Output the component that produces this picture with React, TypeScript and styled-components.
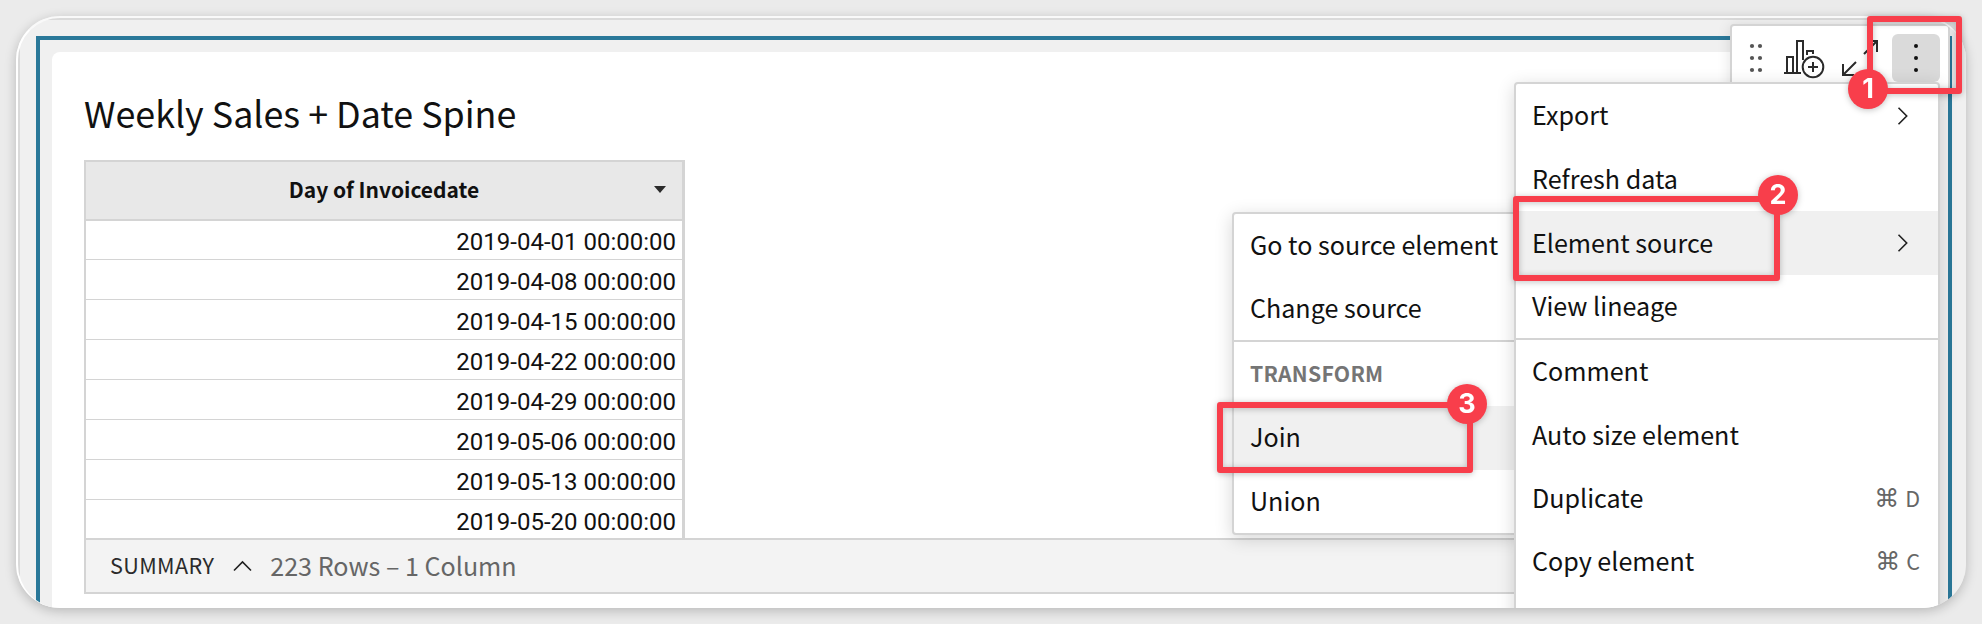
import React from 'react';
import styled, { createGlobalStyle } from 'styled-components';

const sans = `'Noto Sans CJK SC', 'Noto Sans', sans-serif`;

const GlobalStyle = createGlobalStyle`
  * { box-sizing: border-box; }
  body { margin: 0; background: #ebebeb; font-family: ${sans}; color: #111; }
`;

const Stage = styled.main`
  position: relative;
  width: 1982px;
  height: 624px;
  padding: 16px;
  overflow: hidden;
  background: #ebebeb;
`;

const Window = styled.section`
  position: relative;
  width: 1950px;
  height: 592px;
  border-radius: 44px;
  overflow: hidden;
  background: #f0f0f0;
  border-top: 2px solid #f9f9f9;
  border-left: 2px solid #fff;
`;

const WindowShadow = styled.div`
  border-radius: 44px;
  width: 1950px;
  box-shadow: 0 3px 12px rgba(0, 0, 0, 0.22);
`;

const Canvas = styled.div`
  height: 606px;
  padding: 16px 14px 0 16px;
  border-top: 2px solid #dadada;
  border-left: 2px solid #dadada;
`;

const Selected = styled.div`
  height: 640px;
  border: 4px solid #2a7899;
  padding: 12px;
`;

const Element = styled.article`
  height: 640px;
  border-radius: 8px;
  background: #fff;
  padding: 34px 32px 0;
`;

const Title = styled.h1`
  margin: 0 0 22px;
  height: 52px;
  line-height: 52px;
  font-size: 35.85px;
  font-weight: 400;
  white-space: nowrap;
`;

const Table = styled.div`
  width: 601px;
  border: 2px solid #d4d4d4;
  border-right-width: 3px;
  border-bottom: 0;
`;

const HeaderCell = styled.div`
  display: flex;
  align-items: center;
  justify-content: center;
  position: relative;
  height: 59px;
  padding-bottom: 4px;
  border-bottom: 2px solid #d4d4d4;
  background: #e8e8e8;
  font-size: 21px;
  font-weight: 600;
`;

const Caret = styled.span`
  position: absolute;
  right: 16px;
  top: 24px;
  border: 6.5px solid transparent;
  border-top: 7px solid #2b2b2b;
  border-bottom: 0;
`;

const Row = styled.div<{ $last?: boolean; $first?: boolean }>`
  height: ${p => (p.$first ? 39 : p.$last ? 38 : 40)}px;
  line-height: ${p => (p.$first ? 42 : 44)}px;
  padding-right: 6px;
  border-bottom: ${p => (p.$last ? 0 : 1)}px solid #d4d4d4;
  font-family: Roboto, sans-serif;
  font-size: 24px;
  text-align: right;
`;

const Summary = styled.footer`
  display: flex;
  align-items: center;
  height: 56px;
  padding: 0 0 3px 24px;
  border: 2px solid #d4d4d4;
  background: #f3f3f3;
  white-space: nowrap;
`;

const SummaryLabel = styled.span`
  font-size: 21.6px;
  letter-spacing: 0.35px;
  color: #2b2b2b;
`;

const SummaryCount = styled.span`
  font-size: 25.1px;
  color: #666;
`;

const Chevron = styled.svg`
  fill: none;
  stroke: #222;
  stroke-width: 1.6;
  flex: none;
`;

const UpChevron = styled(Chevron)`
  margin: 2px 18px 0 19px;
`;

const Toolbar = styled.div`
  position: absolute;
  left: 1712px;
  top: 6px;
  width: 220px;
  height: 69px;
  display: flex;
  align-items: flex-start;
  border: 2px solid #d4d4d4;
  border-radius: 4px;
  background: #fff;
  box-shadow: 0 2px 14px rgba(0, 0, 0, 0.12);
`;

const ToolIcons = styled.svg`
  flex: none;
  fill: none;
  stroke: #2b2b2b;
  stroke-width: 2;
`;

const MoreButton = styled.div`
  margin-top: 8px;
  width: 48px;
  height: 48px;
  flex: none;
  display: flex;
  flex-direction: column;
  align-items: center;
  justify-content: center;
  gap: 8px;
  border-radius: 6px;
  background: #dadada;
`;

const Dot = styled.i`
  width: 4px;
  height: 4px;
  border-radius: 50%;
  background: #111;
`;

const Menu = styled.div<{ $x: number; $y: number; $w: number; $h: number }>`
  position: absolute;
  left: ${p => p.$x}px;
  top: ${p => p.$y}px;
  width: ${p => p.$w}px;
  height: ${p => p.$h}px;
  border: 2px solid #d4d4d4;
  border-radius: 4px;
  background: #fff;
  box-shadow: 0 4px 18px rgba(0, 0, 0, 0.16);
`;

const Item = styled.div<{ $h?: number; $active?: boolean; $raise?: number }>`
  display: flex;
  align-items: center;
  justify-content: space-between;
  height: ${p => p.$h ?? 63}px;
  padding: 0 18px ${p => 3 + (p.$raise ?? 0)}px 16px;
  background: ${p => (p.$active ? '#f0f0f0' : 'transparent')};
  font-size: 25.1px;
  white-space: nowrap;
`;

const ItemChevron = styled(Chevron)`
  margin: 3px 11px 0 0;
`;

const GroupLabel = styled.div`
  height: 64px;
  padding: 0 16px;
  line-height: 61px;
  font-size: 21.2px;
  font-weight: 600;
  letter-spacing: 0.25px;
  color: #757575;
`;

const Divider = styled.div`
  height: 2px;
  background: #d4d4d4;
`;

const Shortcut = styled.span`
  display: flex;
  align-items: center;
  gap: 6px;
  font-size: 21.6px;
  color: #666;
`;

const CommandKey = styled.span`
  font-family: 'DejaVu Sans', sans-serif;
  font-size: 25px;
  line-height: 24px;
  margin-top: 4px;
`;

const Callout = styled.div<{ $x: number; $y: number; $w: number; $h: number }>`
  position: absolute;
  left: ${p => p.$x}px;
  top: ${p => p.$y}px;
  width: ${p => p.$w}px;
  height: ${p => p.$h}px;
  border: 6px solid #f83e4b;
  border-radius: 3px;
  filter: drop-shadow(0 1px 3px rgba(0, 0, 0, 0.25));
`;

const Badge = styled.span<{ $x: number; $y: number }>`
  position: absolute;
  left: ${p => p.$x}px;
  top: ${p => p.$y}px;
  width: 40px;
  height: 40px;
  border-radius: 50%;
  background: #f83e4b;
  color: #fff;
  font: 700 27px/39px Inter, sans-serif;
  text-align: center;
`;

const dates = [
  '2019-04-01', '2019-04-08', '2019-04-15', '2019-04-22',
  '2019-04-29', '2019-05-06', '2019-05-13', '2019-05-20',
];

const RightChevron = () => (
  <ItemChevron width="12" height="18" viewBox="0 0 12 18">
    <path d="M1.5 .7 9.7 9 1.5 17.3" />
  </ItemChevron>
);

export default function App() {
  return (
    <Stage>
      <GlobalStyle />
      <WindowShadow>
        <Window>
          <Canvas>
            <Selected>
              <Element>
                <Title>Weekly Sales + Date Spine</Title>
                <Table>
                  <HeaderCell>
                    Day of Invoicedate
                    <Caret />
                  </HeaderCell>
                  {dates.map((d, i) => (
                    <Row key={d} $first={i === 0} $last={i === dates.length - 1}>{d} 00:00:00</Row>
                  ))}
                </Table>
                <Summary>
                  <SummaryLabel>SUMMARY</SummaryLabel>
                  <UpChevron width="19" height="12" viewBox="0 0 19 12">
                    <path d="M1 10.5 9.5 2 18 10.5" />
                  </UpChevron>
                  <SummaryCount>223 Rows – 1 Column</SummaryCount>
                </Summary>
              </Element>
            </Selected>
          </Canvas>

          <Toolbar>
            <ToolIcons width="160" height="56" viewBox="1732 26 160 56">
              <g fill="#555" stroke="none">
                {[46, 58, 70].map(y => (
                  <React.Fragment key={y}>
                    <circle cx="1752" cy={y} r="2.1" />
                    <circle cx="1760" cy={y} r="2.1" />
                  </React.Fragment>
                ))}
              </g>
              <path d="M1784 73H1801M1787 73V57H1793V73M1797 73V41H1803V60M1807 55V51H1813V54" />
              <circle cx="1813" cy="67" r="10.3" />
              <path d="M1808 67H1818M1813 62V72" />
              <path d="M1864 54 1877 41M1867 41H1877V52M1856 62 1843 75M1843 64V75H1854" />
            </ToolIcons>
            <MoreButton><Dot /><Dot /><Dot /></MoreButton>
          </Toolbar>

          <Menu $x={1214} $y={194} $w={290} $h={323}>
            <Item>Go to source element</Item>
            <Item>Change source</Item>
            <Divider />
            <GroupLabel>TRANSFORM</GroupLabel>
            <Item $h={64} $active $raise={2}>Join</Item>
            <Item>Union</Item>
          </Menu>

          <Menu $x={1496} $y={64} $w={426} $h={620}>
            <Item>Export<RightChevron /></Item>
            <Item $h={64}>Refresh data</Item>
            <Item $h={64} $active>Element source<RightChevron /></Item>
            <Item>View lineage</Item>
            <Divider />
            <Item>Comment</Item>
            <Item $h={64}>Auto size element</Item>
            <Item>Duplicate<Shortcut><CommandKey>⌘</CommandKey>D</Shortcut></Item>
            <Item>Copy element<Shortcut><CommandKey>⌘</CommandKey>C</Shortcut></Item>
          </Menu>
        </Window>
      </WindowShadow>

      <Callout $x={1867} $y={16} $w={95} $h={78}><Badge $x={-25} $y={47}>1</Badge></Callout>
      <Callout $x={1513} $y={196} $w={267} $h={85}><Badge $x={239} $y={-27}>2</Badge></Callout>
      <Callout $x={1217} $y={402} $w={256} $h={71}><Badge $x={224} $y={-24}>3</Badge></Callout>
    </Stage>
  );
}
